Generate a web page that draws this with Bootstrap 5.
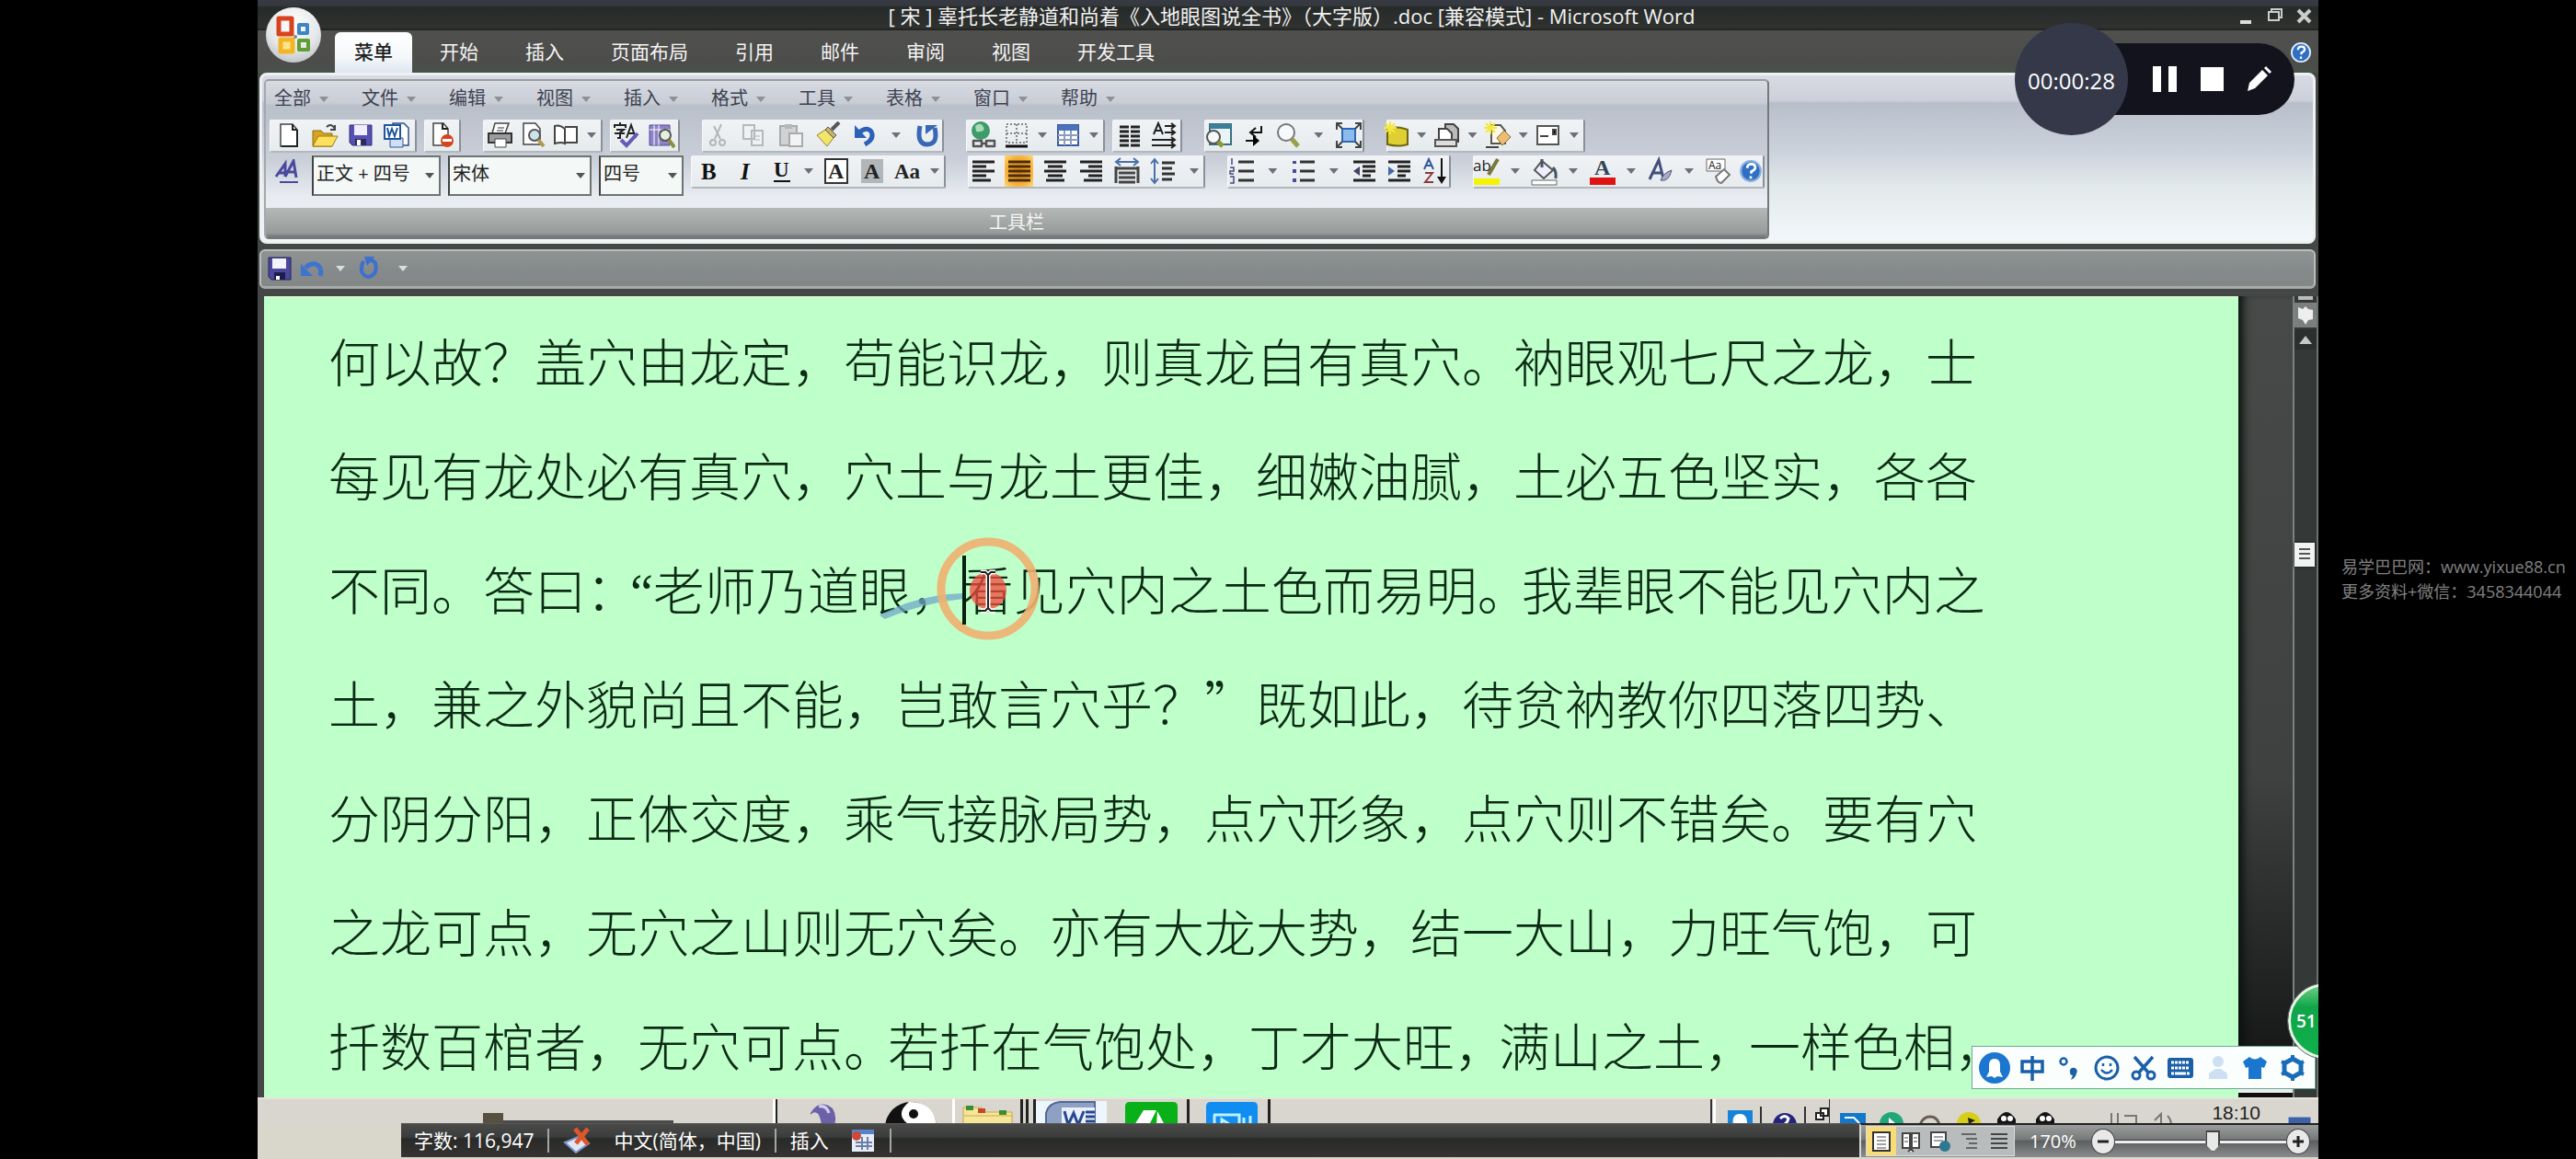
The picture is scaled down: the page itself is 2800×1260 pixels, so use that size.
<!DOCTYPE html>
<html lang="zh-CN">
<head>
<meta charset="utf-8">
<meta name="viewport" content="width=device-width, initial-scale=1">
<title>Microsoft Word</title>
<link href="https://cdn.jsdelivr.net/npm/bootstrap@5.3.0/dist/css/bootstrap.min.css" rel="stylesheet">
<style>
body{background:#000;font-family:"Open Sans","Noto Sans CJK SC",sans-serif;font-size:20px;line-height:24px;color:#fff}
button{border:0;background:none;padding:0;color:inherit;font:inherit}
svg{display:block;flex:none}
.side{width:10%}
.win{width:80%;background:#454746;position:relative;overflow:hidden}
.titlebar{height:33px;background:linear-gradient(#383a44,#35383c 6px,#262a29 8px,#2f322f 30px,#1c1e1c);padding-right:6px}
.titlebar h1{font-size:22px;font-weight:400;line-height:32px;color:#f2f2f2}
.winctl{gap:14px}
.orb{left:9px;top:8px;width:60px;height:60px;border-radius:50%;background:radial-gradient(circle at 50% 30%,#fff,#e4e6e8 55%,#aab0b6);z-index:3}
.tabs{height:46px;background:linear-gradient(#50514e,#4c4c4a 80%,#46534a);padding:2px 8px 0 84px;gap:9px}
.tabs a{height:44px;padding:0 21px;font-size:21px;line-height:42px;color:#f4f4f4;text-decoration:none}
.tabs a.on{background:linear-gradient(#fff,#f5f8fa 60%,#dfe6f2);color:#222;border-radius:6px 6px 0 0;font-weight:500}
.ribbon{height:186px;margin:0 3px 0 2px;border:3px solid #eef1f1;border-radius:8px;background:linear-gradient(#d8dbe4,#cdd0da 27px,#b9bfca 30px,#ccd2dc 82px,#e2e9ea 120px,#f2f6fa 175px);padding:4px 0 0 2px}
.panel{width:1636px;height:174px;border:2px solid #75797c;border-top-color:#9a9ea2;border-left-color:#a4a8ac;border-radius:5px;background:linear-gradient(#d8dbe2,#c8ccd5 24px,#bac0ca 27px,#c9ced8 85px,#e8ecf1 125px,#eef3f4);overflow:hidden}
.menus{height:38px;padding-left:9px;color:#3c4250}
.menus button{width:95px;font-size:20px;line-height:30px;text-align:left}
.menus button::after,.cr::after,.combo::after{content:"";display:inline-block;width:10px;height:6px;background:#6c7079;clip-path:polygon(0 0,100% 0,50% 100%)}
.menus button::after{margin-left:9px;vertical-align:3px;background:#8c9099}
.tools{height:43px;padding-left:4px;gap:24px}
.tools>div{gap:8px}
.grp{height:36px;background:linear-gradient(#f1f3f6,#e6ebee);border-right:2px solid #8a9098;border-bottom:2px solid #b3b8bd;border-left:1px solid #f8f8fa;border-radius:2px;align-items:center}
.grp button{flex:1 1 0;height:34px;display:flex;align-items:center;justify-content:center;min-width:0}
.grp .cr{flex:0 0 20px}
.w38{width:38px}.w40{width:40px}.w76{width:76px}.w130{width:130px}.w151{width:151px}.w160{width:160px}.w174{width:174px}.w216{width:216px}
.w243{width:243px}.w258{width:258px}.w263{width:263px}.w277{width:277px}.w317{width:317px}
.combo{position:relative;height:44px}
.combo select{appearance:none;width:100%;height:44px;border:2px solid #6d7472;border-left-color:#3f4443;background:#f4f8f7;color:#222;font-size:20px;padding:0 0 4px 3px;line-height:30px;border-radius:0}
.combo::after{position:absolute;right:7px;top:19px;background:#555}
.combo.c1{width:140px}.combo.c2{width:156px}.combo.c3{width:92px}
.tools.row3{height:57px;align-items:flex-start}
.hot{background:radial-gradient(#d98a18,#f7ae35 60%,#ffdc7c)}
.glabel{background:linear-gradient(#b4b8b7,#979b9a 85%,#6f7373);line-height:32px;font-size:20px;color:#f4f4f4}
.qat{height:43px;margin:6px 3px 0 2px;border:2px solid #b9bebc;border-bottom:3px solid #a6aba9;border-radius:6px;background:linear-gradient(#8e9392,#85898b 60%,#838886);padding-left:2px}
.qat button{width:36px;height:38px;display:flex;align-items:center;justify-content:center}
.qat .cr{width:24px}
.cr.lt::after{background:#d8dedc}
.doc{flex:1 1 0;min-height:0;margin-top:8px}
.paper{background:#beffca;flex:1 1 0;margin-left:7px;padding:5px 0 0 70px;border-top:2px solid #d5f7d0;overflow:hidden}
.paper p{margin:0;height:124px;font-family:"Noto Sans CJK SC",sans-serif;font-weight:300;font-size:56px;line-height:124px;color:#0c2a14;white-space:nowrap}
.half{font-family:"Liberation Serif",serif;line-height:56px}
.tight{margin-right:-8px}
.gutter{width:59px;background:linear-gradient(#474a48,#3e4140 60%,#1c1d1d 90%,#101010);box-shadow:inset 10px 0 10px -5px #0a120c}
.sbar{width:28px;background:#343837;border-left:2px solid #7c827f;border-right:2px solid #6b7270}
.sbar .thumb{margin-top:210px;width:22px;height:26px;background:#f1f3f2;box-shadow:0 0 3px #111}
.task{height:28px;background:#d9d6cf;border-top:2px solid #e8e4da;overflow:hidden}
.clk{font-family:"Liberation Sans",sans-serif;font-size:21px;line-height:20px;color:#222;top:1200px;right:63px}
.status{height:39px;background:#d9d6cc;padding-left:156px}
.sleft{height:37px;background:linear-gradient(#4a4a48,#3a3d3c 14px,#292928 16px,#353431);gap:15px;padding-left:14px;font-size:21px;border-top:1px solid #55585a}
.vr2{width:2px;height:26px;background:#a5a5a5}
.sright{width:499px;height:37px;background:linear-gradient(#9b9d9c,#777a7a 45%,#5c5f60 50%,#8a8c8c);border-left:2px solid #d8d8d8;border-top:2px solid #222}
.views{width:162px;height:33px;background:#b8bcbd;border:1px solid #ddd;margin-left:5px}
.views button{flex:1 1 0;display:flex;align-items:center;justify-content:center}
.views .on{background:#f8dc78}
input[type=range]{appearance:none;width:186px;height:26px;background:linear-gradient(#0000 11px,#333 11px,#333 12px,#eee 12px,#eee 15px,#0000 15px);margin:0}
input[type=range]::-webkit-slider-thumb{appearance:none;width:16px;height:24px;background:#e8e8e8;border:2px solid #444;clip-path:polygon(0 0,100% 0,100% 65%,50% 100%,0 65%)}
.rnd{width:26px;height:28px;border-radius:50%;background:#e9e9e9;color:#333;border:1px solid #444;display:flex;align-items:center;justify-content:center}
.rec{right:26px;top:25px;height:122px;width:304px;z-index:5}
.pill{height:78px;background:#12131c;border-radius:0 40px 40px 0;margin-left:60px;padding-left:89px;flex:1;gap:25px}
.timer{width:123px;height:122px;border-radius:50%;background:#343849;font-size:24px;color:#fff;left:0;top:0;padding-top:3px}
.ime{right:3px;top:1137px;width:374px;height:47px;background:#fafffd;border:1px solid #6fa894;z-index:4;padding:0 4px}
.ime button{flex:1 1 0;display:flex;justify-content:center}
.ball{right:-49px;top:1069px;width:82px;height:82px;border-radius:50%;border:3px solid #e8f5ea;outline:1px solid #5a6a5c;background:linear-gradient(#6fce84,#10a548 30%,#0fb04c);z-index:5;font-size:19px;font-weight:600;padding-left:6px}
.mark-txt{font-size:18px;line-height:27px;color:#808080;padding:603px 0 0 25px}
.mark-txt a{color:inherit;text-decoration:none}
</style>
<script src="https://cdn.jsdelivr.net/npm/bootstrap@5.3.0/dist/js/bootstrap.bundle.min.js"></script>
</head>
<body>
<div class="d-flex vh-100 overflow-hidden">
<div class="side"></div>
<main class="win d-flex flex-column">
  <header class="titlebar d-flex align-items-center">
    <h1 class="flex-grow-1 text-center m-0 ps-5 ms-5">[ 宋 ] 辜托长老静道和尚着《入地眼图说全书》（大字版）.doc [兼容模式] - Microsoft Word</h1>
    <div class="winctl d-flex align-items-center">
      <button aria-label="最小化"><svg width="18" height="20"><path d="M3 15h12v4H3z" fill="#ddd"/></svg></button>
      <button aria-label="还原"><svg width="18" height="20"><path d="M5 6V3h11v9h-3M2 6h11v9H2z" fill="none" stroke="#ccc" stroke-width="2"/></svg></button>
      <button aria-label="关闭"><svg width="18" height="20"><path d="M2 4l13 13M15 4L2 17" stroke="#ccc" stroke-width="4"/></svg></button>
    </div>
  </header>
  <button class="orb position-absolute d-flex align-items-center justify-content-center" aria-label="Office"><svg width="42" height="44" viewBox="0 0 42 44"><g fill="none"><path d="M5 4h14v17H5z" stroke="#d8421f" stroke-width="5" stroke-linejoin="round"/><path d="M7 27h13v13H7z" stroke="#f3b525" stroke-width="5" stroke-linejoin="round" fill="#fbe58a"/><path d="M27 11h9v9h-9z" stroke="#3c86c8" stroke-width="4" stroke-linejoin="round"/><path d="M27 28h10v10H27z" stroke="#5f9e35" stroke-width="4" stroke-linejoin="round"/></g><circle cx="23" cy="24" r="2" fill="#888"/></svg></button>
  <nav class="tabs d-flex">
    <a class="on" href="#">菜单</a><a href="#">开始</a><a href="#">插入</a><a href="#">页面布局</a><a href="#">引用</a><a href="#">邮件</a><a href="#">审阅</a><a href="#">视图</a><a href="#">开发工具</a>
    <button class="ms-auto align-self-center" aria-label="帮助"><svg width="22" height="24" viewBox="0 0 24 24"><circle cx="12" cy="12" r="11" fill="#2f6fc4" stroke="#dfefff" stroke-width="2"/><path d="M8.500 9q0-4 4-4t4 3.500q0 2-4 4v2M12 17v2.500" fill="none" stroke="#fff" stroke-width="2.500"/></svg></button>
  </nav>
  <section class="ribbon">
    <div class="panel d-flex flex-column">
      <div class="menus d-flex align-items-center">
        <button>全部</button><button>文件</button><button>编辑</button><button>视图</button><button>插入</button><button>格式</button><button>工具</button><button>表格</button><button>窗口</button><button>帮助</button>
      </div>
      <div class="tools d-flex pt-1">
        <div class="d-flex">
          <div class="grp d-flex w160">
            <button aria-label="新建"><svg width="26" height="28" viewBox="0 0 26 28"><path d="M4 2h13l5 6v18H4z" fill="#fff" stroke="#444" stroke-width="1.500"/><path d="M17 2v6h5M22 8v18H5" fill="none" stroke="#222" stroke-width="2"/></svg></button>
            <button aria-label="打开"><svg width="30" height="28" viewBox="0 0 30 28"><path d="M2 9h9l3 3h9v14H2z" fill="#d9a520" stroke="#8a6a10"/><path d="M8 15h21l-6 11H2z" fill="#ffe05e" stroke="#a07a12"/><path d="M17 5q5-5 9 2m0-4v5h-5" fill="none" stroke="#444" stroke-width="2"/></svg></button>
            <button aria-label="保存"><svg width="26" height="28" viewBox="0 0 26 28"><path d="M1 3h24v22H4l-3-3z" fill="#5650b0" stroke="#322f7a"/><path d="M6 3h14v11H6z" fill="#eef"/><path d="M7 18h12v7H7z" fill="#2b2960"/><path d="M9 19h4v6H9z" fill="#fff"/></svg></button>
            <button aria-label="文档"><svg width="28" height="30" viewBox="0 0 28 30"><path d="M10 2h12l5 5v19H10z" fill="#fff" stroke="#2c4f86" stroke-width="1.500"/><path d="M7 18h14v10H7z" fill="#cfe0f5" stroke="#34598f"/><path d="M1 4h17v15H1z" fill="#fff" stroke="#1f559c" stroke-width="2"/><path d="M4 7l2 9 3-8 3 8 3-9" fill="none" stroke="#1f559c" stroke-width="2"/></svg></button>
          </div>
          <div class="grp d-flex w40"><button aria-label="权限"><svg width="28" height="30" viewBox="0 0 28 30"><path d="M4 2h11l5 6v18H4z" fill="#fff" stroke="#444" stroke-width="1.500"/><path d="M14 2v6h6" fill="none" stroke="#222" stroke-width="2"/><circle cx="19" cy="21" r="7" fill="#d8431f"/><path d="M14 19h10v3H14z" fill="#fff"/></svg></button></div>
        </div>
        <div class="d-flex">
          <div class="grp d-flex w130">
            <button aria-label="打印"><svg width="30" height="30" viewBox="0 0 30 30"><path d="M9 2h15l-4 11H6z" fill="#fff" stroke="#444" stroke-width="1.500"/><path d="M2 13h25v10H2z" fill="#9a9ea0" stroke="#333" stroke-width="2"/><path d="M9 19h12v9H9z" fill="#fff" stroke="#444"/><path d="M12 7h7M11 10h7" stroke="#333"/></svg></button>
            <button aria-label="打印预览"><svg width="28" height="30" viewBox="0 0 28 30"><path d="M3 2h13l5 6v17H3z" fill="#fff" stroke="#444" stroke-width="1.500"/><circle cx="15" cy="15" r="6" fill="#cde3ea" stroke="#555" stroke-width="2"/><path d="M19 20l6 7" stroke="#b39a4d" stroke-width="4"/></svg></button>
            <button aria-label="阅读"><svg width="28" height="26" viewBox="0 0 28 26"><path d="M2 3q5-2 11 3v16q-4-2-11 0zM13 4h13v17H13" fill="#fff" stroke="#444" stroke-width="2"/></svg></button>
            <button class="cr" aria-label="更多"></button>
          </div>
          <div class="grp d-flex w76">
            <button aria-label="拼写"><svg width="30" height="30" viewBox="0 0 30 30"><path d="M7 1v3M1 7V4h12v3M3 9h8l-4 3v6H4M1 13h11M14 18l5-14 5 14M16 13h7" fill="none" stroke="#222" stroke-width="2"/><path d="M8 20l6 6L26 13" fill="none" stroke="#6759b5" stroke-width="4"/></svg></button>
            <button aria-label="信息检索"><svg width="30" height="30" viewBox="0 0 30 30"><path d="M2 4h22v22H2z" fill="#8e83c6" stroke="#534a94"/><path d="M7 4v22M12 4v22M2 9h22" stroke="#fff"/><circle cx="19" cy="15" r="6" fill="#e5efe0" stroke="#555" stroke-width="2"/><path d="M23 20l6 8" stroke="#8a8f3a" stroke-width="4"/></svg></button>
          </div>
        </div>
        <div class="grp d-flex w263">
          <button aria-label="剪切"><svg width="22" height="28" viewBox="0 0 22 28"><g fill="none" stroke="#b3b7ba" stroke-width="2"><path d="M15 2L8 18M7 4l7 14"/><circle cx="6" cy="22" r="3"/><circle cx="16" cy="22" r="3"/></g></svg></button>
          <button aria-label="复制"><svg width="28" height="28" viewBox="0 0 28 28"><path d="M2 3h12v15H2zM11 9h12v16H11z" fill="#eff1f2" stroke="#b5b9bc" stroke-width="2"/><path d="M14 15h6M14 19h6" stroke="#b5b9bc"/></svg></button>
          <button aria-label="粘贴"><svg width="28" height="28" viewBox="0 0 28 28"><path d="M2 4h18v21H2z" fill="#d0d3d5" stroke="#aaa" stroke-width="2"/><path d="M7 2h8v5H7z" fill="#b5b9bc"/><path d="M12 12h14v14H12z" fill="#f2f3f4" stroke="#aaa" stroke-width="2"/></svg></button>
          <button aria-label="格式刷"><svg width="30" height="30" viewBox="0 0 30 30"><path d="M3 15l9-6 9 9-7 9z" fill="#f3e56a" stroke="#8c8430"/><path d="M12 9l3-3 9 9-3 3z" fill="#c9b36a" stroke="#555"/><path d="M19 9l8-8" stroke="#555" stroke-width="4"/></svg></button>
          <button aria-label="撤销"><svg width="24" height="28" viewBox="0 0 24 28"><path d="M6 11q8-7 13-1 4 8-7 14" fill="none" stroke="#2d61b8" stroke-width="5"/><path d="M1 3v14h13z" fill="#2d61b8"/></svg></button>
          <button class="cr" aria-label="更多"></button>
          <button aria-label="重复"><svg width="26" height="28" viewBox="0 0 26 28"><path d="M5 4q-4 20 8 20 12 0 8-18" fill="none" stroke="#3767b5" stroke-width="5"/><path d="M11 13V3h13z" fill="#3767b5"/></svg></button>
        </div>
        <div class="d-flex">
          <div class="grp d-flex w151">
            <button aria-label="超链接"><svg width="30" height="32" viewBox="0 0 30 32"><circle cx="12" cy="11" r="10" fill="#3f9a6c"/><path d="M6 6q6-5 9 1t-8 5z" fill="#a9ddb8"/><path d="M4 22h9v6H4zM18 22h9v6h-9zM12 25h7" fill="none" stroke="#555" stroke-width="2.500" stroke-linejoin="round"/></svg></button>
            <button aria-label="边框"><svg width="28" height="30" viewBox="0 0 28 30"><path d="M3 3h22v20H3zM14 3v20M3 13h22" fill="none" stroke="#666" stroke-width="1.500" stroke-dasharray="2 2"/><path d="M2 27h24" stroke="#111" stroke-width="3"/></svg></button>
            <button class="cr" aria-label="更多"></button>
            <button aria-label="表格"><svg width="26" height="28" viewBox="0 0 26 28"><path d="M2 3h22v22H2z" fill="#fff" stroke="#3a5a9c" stroke-width="2"/><path d="M2 3h22v6H2z" fill="#4a72bd"/><path d="M9 9v16M16 9v16M2 14h22M2 19h22" stroke="#8b9dc0" stroke-width="2"/></svg></button>
            <button class="cr" aria-label="更多"></button>
          </div>
          <div class="grp d-flex w76">
            <button aria-label="分栏"><svg width="26" height="28" viewBox="0 0 26 28"><path d="M2 5h10M2 10h10M2 15h10M2 20h10M2 25h10M14 5h10M14 10h10M14 15h10M14 20h10M14 25h10" stroke="#222" stroke-width="3"/></svg></button>
            <button aria-label="文字方向"><svg width="28" height="30" viewBox="0 0 28 30"><path d="M3 14L8 2l5 12M5 10h6M15 5h11M15 12h11M1 20h25M1 26h25M22 2l4 3-4 3M22 9l4 3-4 3M22 17l4 3-4 3M22 23l4 3-4 3" fill="none" stroke="#222" stroke-width="2"/></svg></button>
          </div>
        </div>
        <div class="grp d-flex w174">
          <button aria-label="查找"><svg width="30" height="30" viewBox="0 0 30 30"><path d="M5 3h23v22H5z" fill="#e9f4f4" stroke="#37717d" stroke-width="2"/><path d="M5 3h23v5H5z" fill="#3d7f9b"/><circle cx="9" cy="17" r="7" fill="#f3f8fb" stroke="#555" stroke-width="2"/><path d="M14 22l5 5" stroke="#8c9836" stroke-width="5"/></svg></button>
          <button aria-label="编辑标记"><svg width="22" height="28" viewBox="0 0 22 28"><path d="M19 4v7H7M13 6l-6 5 6 5M2 20h13" fill="none" stroke="#111" stroke-width="2"/><path d="M10 14l7 6-7 6z"/></svg></button>
          <button aria-label="显示比例"><svg width="28" height="30" viewBox="0 0 28 30"><circle cx="12" cy="12" r="9" fill="#f7fafc" stroke="#777" stroke-width="2"/><path d="M18 19l7 8" stroke="#9aa04a" stroke-width="5"/></svg></button>
          <button class="cr" aria-label="更多"></button>
          <button aria-label="全屏"><svg width="30" height="30" viewBox="0 0 30 30"><path d="M8 8h14v14H8z" fill="#8dbbee" stroke="#2c68b5" stroke-width="2"/><path d="M2 9V2h6M22 2h6v7M28 21v7h-6M8 28H2v-7M2 2l6 6M28 2l-6 6M28 28l-6-6M2 28l6-6" fill="none" stroke="#444" stroke-width="2"/></svg></button>
        </div>
        <div class="grp d-flex w216">
          <button aria-label="新建文件夹"><svg width="30" height="30" viewBox="0 0 30 30"><path d="M5 9q8-5 22 0v16q-10 3-22 0z" fill="#e0cf32" stroke="#6b6416" stroke-width="2"/><path d="M8 0v14M1 7h14M3 2l10 10M13 2L3 12" stroke="#f4e83c" stroke-width="2"/></svg></button>
          <button class="cr" aria-label="更多"></button>
          <button aria-label="版本"><svg width="30" height="30" viewBox="0 0 30 30"><path d="M13 3h9l5 5v14H13z" fill="#bbb" stroke="#444" stroke-width="2"/><path d="M6 8h9l5 5v8H6z" fill="#fff" stroke="#444" stroke-width="2"/><path d="M2 20h23v7H2z" fill="#ddd" stroke="#555" stroke-width="2"/></svg></button>
          <button class="cr" aria-label="更多"></button>
          <button aria-label="修订"><svg width="30" height="30" viewBox="0 0 30 30"><path d="M8 4h10l5 6v14H8z" fill="#fff8ea" stroke="#555" stroke-width="2"/><path d="M14 18l8-8 7 7-9 9z" fill="#edbd72" stroke="#8a6230"/><path d="M2 28h14" fill="none" stroke="#444" stroke-width="2"/><path d="M7 0v14M0 7h14M2 2l10 10M12 2L2 12" stroke="#f4e83c" stroke-width="2"/></svg></button>
          <button class="cr" aria-label="更多"></button>
          <button aria-label="信封"><svg width="28" height="26" viewBox="0 0 28 26"><path d="M2 3h23v20H2z" fill="#fff" stroke="#555" stroke-width="2"/><path d="M5 14h9M19 7h3v5h-3z" stroke="#444" stroke-width="2"/></svg></button>
          <button class="cr" aria-label="更多"></button>
        </div>
      </div>
      <div class="tools row3 d-flex">
        <div class="d-flex">
          <button class="w38 d-flex justify-content-center pt-1" aria-label="样式"><svg width="28" height="28" viewBox="0 0 28 28"><path d="M2 19L12 5v14M5 15h7M12 19L21 2l3 18M15 14h8" fill="none" stroke="#4a4a9c" stroke-width="3"/><path d="M6 25h20" stroke="#4a4a9c" stroke-width="2"/></svg></button>
          <label class="combo c1"><select aria-label="样式"><option>正文 + 四号</option></select></label>
          <label class="combo c2"><select aria-label="字体"><option>宋体</option></select></label>
          <label class="combo c3"><select aria-label="字号"><option>四号</option></select></label>
          <div class="grp d-flex w277">
            <button aria-label="加粗"><svg width="24" height="26"><text x="2" y="22" font-family="Liberation Serif" font-weight="700" font-size="25" fill="#111">B</text></svg></button>
            <button aria-label="倾斜"><svg width="20" height="26"><text x="4" y="22" font-family="Liberation Serif" font-weight="700" font-style="italic" font-size="25" fill="#111">I</text></svg></button>
            <button aria-label="下划线"><svg width="22" height="28"><text x="2" y="20" font-family="Liberation Serif" font-weight="700" font-size="23" fill="#111">U</text><path d="M2 25h18" stroke="#111" stroke-width="2"/></svg></button>
            <button class="cr" aria-label="更多"></button>
            <button aria-label="字符边框"><svg width="28" height="30"><path d="M2 2h24v26H2z" fill="#fff" stroke="#333" stroke-width="2"/><text x="5" y="23" font-family="Liberation Serif" font-weight="700" font-size="24" fill="#222">A</text></svg></button>
            <button aria-label="字符底纹"><svg width="26" height="30"><path d="M1 2h24v26H1z" fill="#b2b6b8"/><text x="4" y="23" font-family="Liberation Serif" font-weight="700" font-size="24" fill="#222">A</text></svg></button>
            <button aria-label="更改大小写"><svg width="30" height="28"><text x="0" y="22" font-family="Liberation Serif" font-weight="700" font-size="23" fill="#222">Aa</text></svg></button>
            <button class="cr" aria-label="更多"></button>
          </div>
        </div>
        <div class="grp d-flex w258">
          <button aria-label="左对齐"><svg width="26" height="26"><path d="M1 3h24M1 8h15M1 13h24M1 18h15M1 23h20" stroke="#222" stroke-width="3"/></svg></button>
          <button class="hot" aria-label="两端对齐"><svg width="26" height="26"><path d="M1 3h24M1 8h24M1 13h24M1 18h24M1 23h24" stroke="#4c2c08" stroke-width="3"/></svg></button>
          <button aria-label="居中"><svg width="26" height="26"><path d="M1 3h24M5 8h16M1 13h24M5 18h16M3 23h20" stroke="#222" stroke-width="3"/></svg></button>
          <button aria-label="右对齐"><svg width="26" height="26"><path d="M1 3h24M10 8h15M1 13h24M10 18h15M5 23h20" stroke="#222" stroke-width="3"/></svg></button>
          <button aria-label="分散对齐"><svg width="28" height="30"><path d="M2 10v18M26 10v18M2 12h24M5 17h18M5 22h18M5 27h18" stroke="#444" stroke-width="3"/><path d="M2 5h24M7 1L2 5l5 4M21 1l5 4-5 4" fill="none" stroke="#4a72a8" stroke-width="2"/></svg></button>
          <button aria-label="行距"><svg width="28" height="30"><path d="M5 2v26M1 7l4-5 4 5M1 23l4 5 4-5" fill="none" stroke="#4a72a8" stroke-width="2"/><path d="M13 6h14M13 12h11M13 18h14M13 24h11" stroke="#333" stroke-width="3"/></svg></button>
          <button class="cr" aria-label="更多"></button>
        </div>
        <div class="grp d-flex w243">
          <button aria-label="编号"><svg width="28" height="30"><path d="M10 5h17M10 15h17M10 25h17" stroke="#333" stroke-width="3"/><path d="M3 1v7M1 11h4v4H1v3h4M1 21h4v7H1" fill="none" stroke="#4a4a7c" stroke-width="1.500"/></svg></button>
          <button class="cr" aria-label="更多"></button>
          <button aria-label="项目符号"><svg width="26" height="28"><path d="M9 4h16M9 14h16M9 24h16" stroke="#333" stroke-width="3"/><path d="M1 3h4v3H1zM1 12h4v4H1zM1 22h4v4H1z" fill="#4a4a9c"/></svg></button>
          <button class="cr" aria-label="更多"></button>
          <button aria-label="减少缩进"><svg width="28" height="28"><path d="M2 4h24M12 9h14M12 14h14M12 19h9M2 24h24" stroke="#222" stroke-width="3"/><path d="M9 9v10l-7-5z" fill="#446"/></svg></button>
          <button aria-label="增加缩进"><svg width="28" height="28"><path d="M2 4h24M12 9h14M12 14h14M12 19h9M2 24h24" stroke="#222" stroke-width="3"/><path d="M2 9v10l7-5z" fill="#46a"/></svg></button>
          <button aria-label="排序"><svg width="26" height="30"><path d="M1 13L6 2l5 11M3 9h6" fill="none" stroke="#345a9c" stroke-width="2"/><path d="M2 17h8L2 27h9" fill="none" stroke="#8c3a3a" stroke-width="2"/><path d="M20 1v22" stroke="#111" stroke-width="2"/><path d="M15 21h10l-5 8z" fill="#111"/></svg></button>
        </div>
        <div class="grp d-flex w317">
          <button aria-label="突出显示"><svg width="30" height="32"><path d="M1 24h28v7H1z" fill="#f4f400"/><text x="0" y="16" font-size="17" fill="#222">ab</text><path d="M27 3L17 20" stroke="#777a3a" stroke-width="4"/></svg></button>
          <button class="cr" aria-label="更多"></button>
          <button aria-label="底纹"><svg width="30" height="32"><path d="M1 26h27v5H1z" fill="#fff" stroke="#666"/><path d="M12 5l12 10-10 9L4 15z" fill="#eef" stroke="#555" stroke-width="2"/><path d="M12 12V3M24 12q4 4 3 12" fill="none" stroke="#456" stroke-width="3"/></svg></button>
          <button class="cr" aria-label="更多"></button>
          <button aria-label="字体颜色"><svg width="30" height="32"><text x="6" y="20" font-family="Liberation Serif" font-weight="700" font-size="24" fill="#345">A</text><path d="M1 23h28v8H1z" fill="#e01313"/></svg></button>
          <button class="cr" aria-label="更多"></button>
          <button aria-label="文字效果"><svg width="30" height="32"><path d="M3 25L13 4l5 20M7 18h9" fill="none" stroke="#44507c" stroke-width="3"/><path d="M27 15q-9 3-12 11 9 2 12-11z" fill="#a8acc6" stroke="#557"/></svg></button>
          <button class="cr" aria-label="更多"></button>
          <button aria-label="清除格式"><svg width="30" height="32"><path d="M2 3h20v13H2z" fill="#fff" stroke="#666"/><text x="4" y="14" font-size="12" fill="#222">Aa</text><path d="M12 22l9-8 6 6-9 9q-4 0-6-7z" fill="#fff" stroke="#777" stroke-width="2"/></svg></button>
          <button aria-label="帮助"><svg width="26" height="28" viewBox="0 0 24 24"><circle cx="12" cy="12" r="10" fill="#2f6fc4" stroke="#88aee0" stroke-width="2"/><path d="M8.500 9q0-4 4-4t4 3.500q0 2-4 4v2M12 17v2.500" fill="none" stroke="#fff" stroke-width="2.500"/></svg></button>
        </div>
      </div>
      <div class="glabel text-center flex-grow-1">工具栏</div>
    </div>
  </section>
  <div class="qat d-flex align-items-center flex-shrink-0">
    <button aria-label="保存"><svg width="26" height="28" viewBox="0 0 26 28"><path d="M1 2h24v24H4l-3-3z" fill="#4d489c" stroke="#24225c"/><path d="M5 3h15v11H5z" fill="#f4f4ff"/><path d="M7 18h12v8H7z" fill="#1d1b50"/><path d="M9 22h4v4H9z" fill="#fff"/></svg></button>
    <button aria-label="撤销"><svg width="26" height="22" viewBox="0 0 26 22"><path d="M5 10q9-8 15-1 3 4 1 10" fill="none" stroke="#3c74cf" stroke-width="5"/><path d="M0 6v13h13z" fill="#3c74cf"/></svg></button>
    <button class="cr lt" aria-label="更多"></button>
    <button aria-label="重复"><svg width="24" height="28" viewBox="0 0 24 28"><path d="M7 6q-6 14 5 17 11-2 8-15-3-4-9-3" fill="none" stroke="#3b6fd0" stroke-width="4"/><path d="M8 1h11l-8 10z" fill="#3b6fd0"/></svg></button>
    <button class="cr lt ms-2" aria-label="自定义"></button>
  </div>
  <div class="doc d-flex">
    <article class="paper">
      <p>何以故？盖穴由龙定，苟能识龙，则真龙自有真穴。衲眼观七尺之龙，士</p>
      <p>每见有龙处必有真穴，穴土与龙土更佳，细嫩油腻，土必五色坚实，各各</p>
      <p>不同。答曰<span class="tight">：</span><span class="half">“</span>老师乃道眼，<span class="position-relative">看<svg class="position-absolute top-50 start-50 translate-middle" width="240" height="120" viewBox="0 0 240 120"><path d="M2 90Q40 68 92 66L94 72Q50 76 8 94z" fill="#6fa8c8" opacity=".75"/><circle cx="120" cy="61" r="51" fill="none" stroke="#efb070" stroke-width="9" opacity=".9"/><circle cx="120" cy="63" r="20" fill="#f24a3e" opacity=".75"/><path d="M94 25v75" stroke="#06200e" stroke-width="4"/><path d="M112 43h5l3 3 3-3h5M120 46v36M112 85h5l3-3 3 3h5" fill="none" stroke="#fff" stroke-width="5"/><path d="M112 43h5l3 3 3-3h5M120 46v36M112 85h5l3-3 3 3h5" fill="none" stroke="#222" stroke-width="2"/></svg></span>见穴内之土色而易明<span class="tight">。</span>我辈眼不能见穴内之</p>
      <p>土，兼之外貌尚且不能，岂敢言穴乎？”既如此，待贫衲教你四落四势、</p>
      <p>分阴分阳，正体交度，乘气接脉局势，点穴形象，点穴则不错矣。要有穴</p>
      <p>之龙可点，无穴之山则无穴矣。亦有大龙大势，结一大山，力旺气饱，可</p>
      <p>扦数百棺者，无穴可点<span class="tight">。</span>若扦在气饱处，丁才大旺<span class="tight">，</span>满山之土<span class="tight">，</span>一样色相，</p>
    </article>
    <div class="gutter d-flex flex-column justify-content-end pb-1"><svg class="w-100" height="8"><path d="M0 0h59v7H0z" fill="#eceeee"/></svg></div>
    <div class="sbar">
      <svg width="24" height="58" viewBox="0 0 24 58"><path d="M4 0h16v4H4z" fill="#bbb"/><path d="M0 7h24v27H0z" fill="#7b807e"/><path d="M4 12l5 2 3-3 3 3 5 1v10l-5 1-3 5-3-5-5-2z" fill="#eee"/><path d="M0 36h24v22H0z" fill="#2b2f2e"/><path d="M5 52h14l-7-9z" fill="#c4c8c6"/></svg>
      <div class="thumb"><svg width="22" height="26"><path d="M5 7h12M5 12h12M5 17h12" stroke="#555" stroke-width="2"/></svg></div>
    </div>
  </div>
  <div class="task flex-shrink-0 d-flex">
    <svg width="1110" height="28" viewBox="0 0 1110 28"><path d="M245 15h22v11h-22z" fill="#55503f"/><path d="M267 23h185v3H267z" fill="#4a4a4a"/><path d="M560 0h3v28h-3zM755 0h3v28h-3z" fill="#fff"/><path d="M563 0h2v28h-2zM829 0h3v28h-3zM835 0h3v28h-3zM843 0h3v28h-3zM1010 0h3v28h-3zM1098 0h3v28h-3z" fill="#222"/>
      <path d="M601 15q10-16 24-5 5 8 2 18h-14q-2-12-5-13-4-2-7 2z" fill="#6c61a8"/><path d="M610 8q8-2 11 7" stroke="#d4cff0" stroke-width="3" fill="none"/>
      <circle cx="710" cy="31" r="28" fill="#111"/><path d="M708 3q28 0 30 27h-26q-22-12-4-27z" fill="#fff"/><circle cx="713" cy="16" r="5" fill="#111"/>
      <path d="M767 9h20l3 5h30v14h-53z" fill="#f6e697" stroke="#c9a640"/><path d="M770 7h8v5h-8zM806 12h8v5h-8z" fill="#3c8c34"/><path d="M783 10h8v5h-8z" fill="#c4472b"/><path d="M768 18h52" stroke="#caa84b"/>
      <path d="M846 2h77v26h-77z" fill="#edf6fd"/><path d="M857 28V15q3-11 15-12h38v25z" fill="#8ea1c4" stroke="#50679a" stroke-width="2"/><path d="M874 9h36v19h-36z" fill="#e9f0fa"/><path d="M877 13l4 15 6-13 5 13 6-15M900 14h10M900 19h10M900 24h10" fill="none" stroke="#27488f" stroke-width="3"/>
      <path d="M943 28V8q0-5 5-5h47q5 0 5 5v20z" fill="#08b118"/><path d="M953 28l10-16h14l-8 16zM978 13l8 15h-9z" fill="#fff"/>
      <path d="M1031 28V8q0-5 5-5h46q5 0 5 5v20z" fill="#0f8df0"/><path d="M1039 17h28v11M1040 17v11M1048 28v-6l8 5M1072 20v8M1079 18v10" fill="none" stroke="#bff0ff" stroke-width="3"/></svg>
    <svg class="ms-auto" width="665" height="28" viewBox="0 0 665 28"><path d="M7 0h3v28H7z" fill="#fff"/><path d="M4 0h2v28H4zM58 8h2v20h-2zM106 8h2v20h-2zM133 0h1v28h-1z" fill="#333"/><path d="M23 12h27v16H23z" fill="#1684d8"/><path d="M29 28q-2-12 7-12t8 12z" fill="#fff"/><circle cx="85" cy="28" r="13" fill="#24247e"/><path d="M80 21q5-5 9 0-1 4-4 6" fill="none" stroke="#fff" stroke-width="3"/><path d="M124 10h8v8h-8zM119 15h8v7h-8z" fill="#fff" stroke="#222" stroke-width="2"/><path d="M145 15h28v13h-28z" fill="#1278ca"/><path d="M150 20h10l6 6" fill="none" stroke="#fff" stroke-width="2"/><circle cx="201" cy="27" r="13" fill="#20a878"/><path d="M198 20l7 6h-7z" fill="#fff"/><path d="M232 28q3-9 11-9t10 9" fill="none" stroke="#665f50" stroke-width="3"/><circle cx="285" cy="27" r="13" fill="#d6cf18"/><path d="M284 20l8 3-7 4z" fill="#222"/><g fill="#141414"><path d="M316 28V22q10-16 20 0v6zM358 28V22q10-16 20 0v6z"/></g><g fill="#fff"><circle cx="323" cy="21" r="3"/><circle cx="330" cy="21" r="3"/><circle cx="365" cy="21" r="3"/><circle cx="372" cy="21" r="3"/></g><path d="M440 15v13M447 15v13M454 18h13v10M487 23l7-7v12M501 18q4 4 4 10" fill="none" stroke="#777" stroke-width="2"/><path d="M632 19h25v9h-25z" fill="#3d62a8" stroke="#ddd"/></svg>
  </div>
  <time class="clk position-absolute">18:10</time>
  <footer class="status flex-shrink-0 d-flex">
    <div class="sleft d-flex align-items-center flex-grow-1">
      <span>字数: 116,947</span><span class="vr2"></span>
      <svg width="32" height="32" viewBox="0 0 32 32"><path d="M2 18l14-6 12 7-14 10z" fill="#dfe6f5" stroke="#7b92c8" stroke-width="2"/><path d="M13 3l14 17M27 3L14 19" stroke="#e0562b" stroke-width="5"/></svg>
      <span class="ms-2">中文(简体，中国)</span><span class="vr2"></span><span>插入</span>
      <svg class="ms-2" width="28" height="28" viewBox="0 0 28 28"><path d="M2 2h24v24H2z" fill="#e8edf5"/><path d="M2 2h24v5H2z" fill="#5882cc"/><circle cx="7" cy="9" r="5" fill="#cc4936"/><path d="M6 16h18M6 20h18M13 10v14M19 10v14" stroke="#6b7fa8" stroke-width="2"/></svg>
      <span class="vr2"></span>
    </div>
    <div class="sright d-flex align-items-center">
      <div class="views d-flex">
        <button class="on" aria-label="页面视图"><svg width="22" height="24"><path d="M2 2h18v20H2z" fill="#fff" stroke="#333" stroke-width="2"/><path d="M6 7h10M6 11h10M6 15h10M6 19h10" stroke="#444"/></svg></button>
        <button aria-label="阅读版式"><svg width="22" height="24"><path d="M2 3h8v16H2zM12 3h8v16h-8zM8 23l3-3 3 3" fill="#fff" stroke="#444" stroke-width="2"/><path d="M4 8h4M4 12h4M14 8h4M14 12h4" stroke="#444"/></svg></button>
        <button aria-label="Web 版式"><svg width="24" height="24"><path d="M2 2h16v16H2z" fill="#fff" stroke="#444" stroke-width="2"/><path d="M5 7h10M5 11h10" stroke="#444"/><circle cx="17" cy="17" r="6" fill="#2c7890"/></svg></button>
        <button aria-label="大纲"><svg width="20" height="24"><path d="M1 4h16M6 9h12M9 14h9M6 19h12" stroke="#666" stroke-width="2"/></svg></button>
        <button aria-label="草稿"><svg width="22" height="24"><path d="M2 4h18M2 9h18M2 14h18M2 19h18" stroke="#444" stroke-width="2"/></svg></button>
      </div>
      <label for="zm" class="ms-3">170%</label>
      <button class="rnd ms-3" aria-label="缩小"><svg width="14" height="14"><path d="M1 7h12" stroke="#222" stroke-width="3"/></svg></button>
      <input id="zm" type="range" min="0" max="100" value="58">
      <button class="rnd" aria-label="放大"><svg width="14" height="14"><path d="M1 7h12M7 1v12" stroke="#222" stroke-width="3"/></svg></button>
    </div>
  </footer>
  <div class="rec position-absolute d-flex align-items-center">
    <div class="pill d-flex align-items-center">
      <button aria-label="暂停"><svg width="28" height="28"><path d="M1 0h9v28H1zM18 0h9v28h-9z" fill="#fff"/></svg></button>
      <button aria-label="停止"><svg width="25" height="26"><path d="M0 0h25v26H0z" fill="#fff"/></svg></button>
      <button aria-label="画笔"><svg width="28" height="28" viewBox="0 0 28 28"><path d="M1 27l2-9L17 4l6 6L9 24zM19 2l2-2 6 6-2 2z" fill="#fff"/></svg></button>
    </div>
    <div class="timer position-absolute d-flex align-items-center justify-content-center">00:00:28</div>
  </div>
  <div class="ime position-absolute d-flex align-items-center">
    <button aria-label="输入法"><svg width="34" height="36" viewBox="0 0 34 36"><circle cx="17" cy="18" r="17" fill="#1b76cf"/><path d="M8 28l3-6V15q0-7 6-7t6 7v7l3 6-6-1-3 2-3-2z" fill="#fff"/></svg></button>
    <button aria-label="中文"><svg width="28" height="34" viewBox="0 0 28 34"><path d="M3 10h22v11H3zM14 4v27" fill="none" stroke="#1a5fa8" stroke-width="3.500"/></svg></button>
    <button aria-label="标点"><svg width="26" height="28" viewBox="0 0 26 28"><circle cx="7" cy="7" r="3.500" fill="none" stroke="#1a5fa8" stroke-width="2.500"/><path d="M14 19a4 4 0 1 1 7 1q-1 5-6 7l2-5q-3 0-3-3z" fill="#1a5fa8"/></svg></button>
    <button aria-label="表情"><svg width="28" height="28" viewBox="0 0 28 28"><circle cx="14" cy="14" r="12" fill="none" stroke="#1a5fa8" stroke-width="3"/><path d="M8 16q6 7 12 0M10 9v3M18 9v3" fill="none" stroke="#1a5fa8" stroke-width="2.500"/></svg></button>
    <button aria-label="截图"><svg width="28" height="28" viewBox="0 0 28 28"><path d="M4 2l16 18M24 2L8 20" stroke="#1a5fa8" stroke-width="3.500"/><circle cx="6" cy="22" r="4" fill="none" stroke="#1a5fa8" stroke-width="3"/><circle cx="22" cy="22" r="4" fill="none" stroke="#1a5fa8" stroke-width="3"/></svg></button>
    <button aria-label="键盘"><svg width="30" height="24" viewBox="0 0 30 24"><rect x="1" y="1" width="28" height="22" rx="3" fill="#1a5fa8"/><path d="M5 6h20M5 12h20" stroke="#fff" stroke-width="3" stroke-dasharray="3 1"/><path d="M5 18h20" stroke="#fff" stroke-width="3" stroke-dasharray="3 1 12 1"/></svg></button>
    <button aria-label="用户"><svg width="26" height="28" viewBox="0 0 26 28"><circle cx="13" cy="7" r="6" fill="#cfdff2"/><path d="M3 26V20l7-5h6l7 5v6z" fill="#cfdff2"/></svg></button>
    <button aria-label="皮肤"><svg width="28" height="28" viewBox="0 0 28 28"><path d="M8 2q6 5 12 0l7 5-3 7-3-1v13H7V13l-3 1L1 7z" fill="#1b76cf"/></svg></button>
    <button aria-label="设置"><svg width="28" height="28" viewBox="0 0 28 28"><path d="M14 4l9 5v10l-9 5-9-5V9z" fill="none" stroke="#1a6cb8" stroke-width="5"/><path d="M14 0v5M14 23v5M2 7l4 2M22 19l4 2M2 21l4-2M22 9l4-2" stroke="#1a6cb8" stroke-width="4"/></svg></button>
  </div>
  <div class="ball position-absolute d-flex align-items-center">51</div>
</main>
<aside class="side mark-txt text-nowrap">易学巴巴网：<a href="#">www.yixue88.cn</a><br>更多资料+微信：3458344044</aside>
</div>
</body>
</html>
